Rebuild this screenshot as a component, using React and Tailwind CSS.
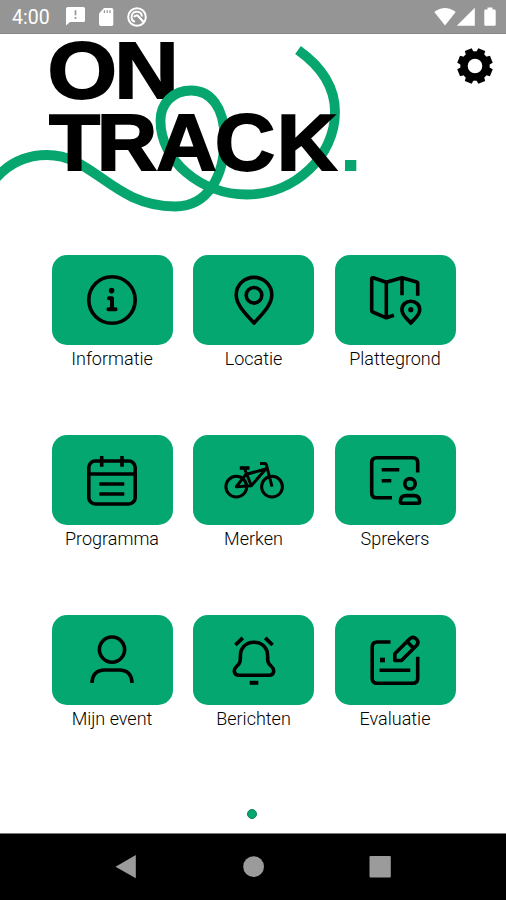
import React from 'react';

const TileIcon = ({ children }) => (
  <svg
    viewBox="0 0 60 60"
    className="w-15 h-15"
    fill="none"
    stroke="black"
    strokeWidth="3.6"
    strokeLinejoin="round"
  >
    {children}
  </svg>
);

const tiles = [
  {
    label: 'Informatie',
    icon: (
      <TileIcon>
        <circle cx="30" cy="30" r="23.2" />
        <circle cx="29.6" cy="20.6" r="2.8" fill="black" stroke="none" />
        <path d="M27 28.3H30V39.3M26.4 39.3H33.6" strokeWidth="4" strokeLinecap="round" />
      </TileIcon>
    ),
  },
  {
    label: 'Locatie',
    icon: (
      <TileIcon>
        <path d="M30 53C25 47 12.2 36 12.2 25C12.2 15 20 7.4 30 7.4S47.8 15 47.8 25C47.8 36 35 47 30 53Z" />
        <circle cx="30" cy="25.3" r="7.8" />
      </TileIcon>
    ),
  },
  {
    label: 'Plattegrond',
    icon: (
      <TileIcon>
        <path d="M52.7 25.7V13.3Q52.7 12.3 51.7 12L37 7.7L21.3 12.3L8.2 7.8Q6.7 7.4 6.7 9V40.5Q6.7 41.6 7.7 42L21.3 47.8L28.9 45.2M21.3 12.3V47.8M37 7.7V25.3" />
        <path d="M45.8 53C42.5 49 36.9 45.5 36.9 39.8C36.9 34.8 40.8 31.2 45.8 31.2S54.7 34.8 54.7 39.8C54.7 45.5 49.1 49 45.8 53Z" />
        <circle cx="45.8" cy="39.7" r="2.6" fill="black" stroke="none" />
      </TileIcon>
    ),
  },
  {
    label: 'Programma',
    icon: (
      <TileIcon>
        <rect x="6.8" y="11" width="46.4" height="43" rx="6.5" />
        <path d="M6.8 24H53.2M19.7 6V16.7M40 6V16.7M17.3 34H42.3M17.3 44H42.3" />
      </TileIcon>
    ),
  },
  {
    label: 'Merken',
    icon: (
      <TileIcon>
        <g strokeWidth="3">
          <circle cx="12.3" cy="36.7" r="10.4" />
          <circle cx="48" cy="36.7" r="10.4" />
          <path d="M12.3 36.7L21.8 24.5L41.7 19L27.3 35.8ZM20.3 18L27.3 35.8M36 13.6H40.5Q42 13.6 42.4 15L48 36.7" />
          <path d="M15.8 18H25.5" strokeWidth="3.6" />
        </g>
      </TileIcon>
    ),
  },
  {
    label: 'Sprekers',
    icon: (
      <TileIcon>
        <path d="M52.7 22.5V12.7Q52.7 7.7 47.7 7.7H11.7Q6.7 7.7 6.7 12.7V42.7Q6.7 47.7 11.7 47.7H27M16.7 19.7H34.3M16.7 30.7H26.3" />
        <circle cx="45" cy="33.8" r="5.2" />
        <path d="M35.4 51.5Q35.4 45.6 41 45.6H49Q54.6 45.6 54.6 51.5Q54.6 53.3 53 53.3H37Q35.4 53.3 35.4 51.5Z" />
      </TileIcon>
    ),
  },
  {
    label: 'Mijn event',
    icon: (
      <TileIcon>
        <circle cx="30" cy="19.6" r="12.6" />
        <path d="M10 53Q10.5 40 23 40H37Q49.5 40 50 53" />
      </TileIcon>
    ),
  },
  {
    label: 'Berichten',
    icon: (
      <TileIcon>
        <path d="M30 12.3C22 12.3 16.4 18 16.4 25.5C16.4 31.5 16.4 33 13 36C8.5 40 10 45.3 15 45.3H45C50 45.3 51.5 40 47 36C43.6 33 43.6 31.5 43.6 25.5C43.6 18 38 12.3 30 12.3Z" />
        <path d="M11.4 15L18.8 7.9M48.6 15L41.2 7.9" strokeWidth="3.8" />
        <path d="M25.7 52.8H34.3" strokeWidth="4" />
      </TileIcon>
    ),
  },
  {
    label: 'Evaluatie',
    icon: (
      <TileIcon>
        <path d="M25.5 12H12.2Q7.2 12 7.2 17V48.5Q7.2 53.3 12.2 53.3H47.7Q52.7 53.3 52.7 48.5V26.7M14.5 40.2H45.3" />
        <path d="M29.8 30.5V23.8L44.8 8.8Q48 5.8 51.3 9Q54.5 12.3 51.5 15.5L36.5 30.5ZM42.2 11.7L48.7 18.2" />
        <path d="M15 30H20" strokeWidth="4.6" />
      </TileIcon>
    ),
  },
];

const StatusBar = () => (
  <div className="flex h-[34px] shrink-0 items-center justify-between border-b border-[#858585] bg-[#959595] pl-3 pr-2.5 text-white">
    <div className="flex items-center">
      <span className="w-[54px] font-['Roboto',sans-serif] text-[19.5px] leading-5 pt-0.5">4:00</span>
      <svg viewBox="0 0 20 20" className="w-5 h-5" fill="white">
        <path d="M2 0H17.5Q19 0 19 1.5V13.5Q19 15 17.5 15H4L0 18.5V2Q0 0 2 0Z" />
        <path d="M9.5 3.2V8.2M9.5 10V12" stroke="#959595" strokeWidth="1.7" />
      </svg>
      <svg viewBox="0 0 16 20" className="ml-3 w-4 h-5" fill="white">
        <path d="M6 1H13.5Q15.3 1 15.3 2.8V17.2Q15.3 19 13.5 19H3Q1 19 1 17V6.5Z" />
        <path d="M6.4 3.2V6M9.2 3.2V6M12 3.2V6" stroke="#959595" strokeWidth="1.2" />
      </svg>
      <svg viewBox="0 0 20 20" className="ml-[13px] w-5 h-5" fill="none" stroke="white">
        <circle cx="10" cy="10" r="8.8" strokeWidth="2" />
        <path d="M8 14.8A5.2 5.2 0 1 1 15 9.5" strokeWidth="2" />
        <path d="M7 10Q9.5 7.2 11.5 9.5L17 15.5" strokeWidth="2.2" />
      </svg>
    </div>
    <div className="flex items-center">
      <svg viewBox="0 0 22 20" className="w-[22px] h-5" fill="white">
        <path d="M0.3 5Q11 -3 21.7 5L11 18.5Z" />
      </svg>
      <svg viewBox="0 0 20 20" className="w-5 h-5" fill="white">
        <path d="M18.8 0.8V18.7H0.8Z" />
      </svg>
      <svg viewBox="0 0 12 20" className="ml-2 w-3 h-5" fill="white">
        <path d="M3.5 0.5H8.5V2.5H10.5Q11.7 2.5 11.7 3.7V17.5Q11.7 18.7 10.5 18.7H1.5Q0.3 18.7 0.3 17.5V3.7Q0.3 2.5 1.5 2.5H3.5Z" />
      </svg>
    </div>
  </div>
);

const Logo = () => (
  <svg viewBox="0 34 506 221" className="w-[506px] h-[221px]">
    <text
      x="42.9 103"
      y="98.3"
      transform="scale(1.11 1)"
      stroke="black"
      strokeWidth="1.8"
      className="font-['Liberation_Sans',sans-serif] text-[80.5px] font-bold"
    >
      ON
    </text>
    <path
      d="M-4 178C12 160 30 155 47 155C94 155 112 206 175 206.5C208 206.5 224.5 176 224.5 138C224.5 107 210 90.5 191.5 90.5C173 90.5 160.5 103 160.5 121C160.5 160 200 194.5 247 194.5C295 194.5 335 156 335 112C335 88 322 67 298 50"
      fill="none"
      stroke="#06a66e"
      strokeWidth="9.8"
    />
    <text
      x="47.2 93 150.3 206.6 266.2"
      y="170.3"
      transform="scale(1.04 1)"
      stroke="black"
      strokeWidth="1.8"
      className="font-['Liberation_Sans',sans-serif] text-[80.5px] font-bold"
    >
      TRACK
    </text>
    <rect x="345" y="160" width="11.3" height="11" fill="#06a66e" />
  </svg>
);

const SettingsIcon = () => (
  <svg viewBox="-18 -18 36 36" className="w-9 h-9">
    <circle r="11" fill="none" stroke="black" strokeWidth="7.4" />
    {[22.5, 67.5, 112.5, 157.5, 202.5, 247.5, 292.5, 337.5].map((angle) => (
      <path key={angle} d="M-4.4 -12L-3.7 -17.7H3.7L4.4 -12Z" transform={`rotate(${angle})`} />
    ))}
  </svg>
);

const App = () => (
  <div className="flex h-[900px] w-[506px] flex-col overflow-hidden bg-white">
    <StatusBar />

    <div className="relative h-[221px] shrink-0">
      <Logo />
      <button className="absolute right-[13px] top-3.5" aria-label="Instellingen">
        <SettingsIcon />
      </button>
    </div>

    <div className="flex justify-center pl-px">
      <div className="grid grid-cols-3 gap-x-[20.5px]">
        {tiles.map((tile) => (
          <div key={tile.label} className="flex h-[180px] w-[121px] flex-col items-center">
            <div className="flex h-[90px] w-full items-center justify-center rounded-[15px] bg-[#04a770]">
              {tile.icon}
            </div>
            <span className="whitespace-nowrap pt-0.5 font-['Roboto',sans-serif] text-[18px] font-light leading-6 text-black">
              {tile.label}
            </span>
          </div>
        ))}
      </div>
    </div>

    <div className="flex grow items-center justify-center pr-[3px]">
      <div className="h-2.5 w-2.5 rounded-full border border-[#0b7d57] bg-[#04a770]" />
    </div>

    <div className="flex h-[67px] shrink-0 items-center border-t border-[#777777] bg-black">
      <svg viewBox="0 0 506 66" className="h-[66px] w-[506px]" fill="#9b9b9b">
        <path d="M115.5 32.7L135.8 21V44.3Z" />
        <circle cx="253.6" cy="32.7" r="10.4" />
        <rect x="369.5" y="22" width="21.3" height="21.6" rx="1" />
      </svg>
    </div>
  </div>
);

export default App;
